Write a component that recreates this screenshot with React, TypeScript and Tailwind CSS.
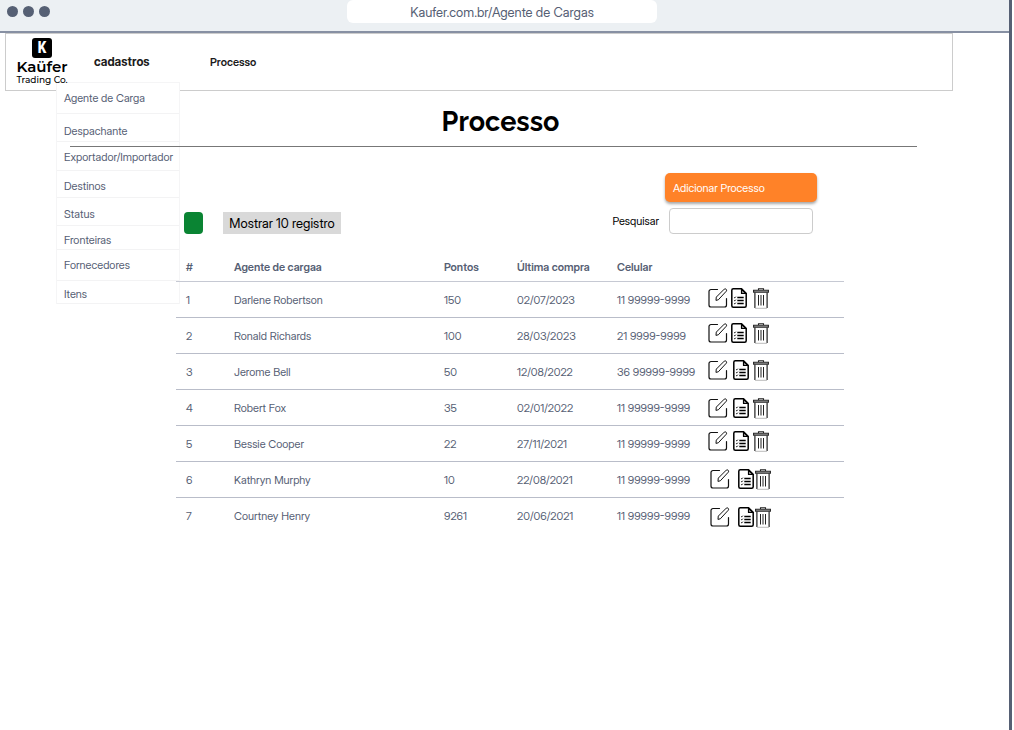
import React from "react";

const MENU = [
  { label: "Agente de Carga", size: "h-[31px]" },
  { label: "Despachante", size: "mt-0.5 h-[26px] pt-1" },
  { label: "Exportador/Importador", size: "h-[29px] pt-0.5" },
  { label: "Destinos", size: "h-[27px] pt-1" },
  { label: "Status", size: "h-7 pt-1" },
  { label: "Fronteiras", size: "h-6 pt-1" },
  { label: "Fornecedores", size: "h-[31px]" },
  { label: "Itens", size: "h-[23px] pt-1" },
];

const NEAR = "grid-cols-[23px_22px_16px]";
const MID = "grid-cols-[25px_20px_16px]";
const FAR = "pl-0.5 grid-cols-[28px_17px_16px]";

const ROWS = [
  { name: "Darlene Robertson", points: "150", date: "02/07/2023", phone: "11 99999-9999", actions: NEAR + " pb-1" },
  { name: "Ronald Richards", points: "100", date: "28/03/2023", phone: "21 9999-9999", actions: NEAR + " pb-1.5" },
  { name: "Jerome Bell", points: "50", date: "12/08/2022", phone: "36 99999-9999", actions: MID + " pb-1" },
  { name: "Robert Fox", points: "35", date: "02/01/2022", phone: "11 99999-9999", actions: MID },
  { name: "Bessie Cooper", points: "22", date: "27/11/2021", phone: "11 99999-9999", actions: MID + " pb-1.5" },
  { name: "Kathryn Murphy", points: "10", date: "22/08/2021", phone: "11 99999-9999", actions: FAR + " pb-0.5" },
  { name: "Courtney Henry", points: "9261", date: "20/06/2021", phone: "11 99999-9999", actions: FAR + " pt-0.5" },
];

function EditIcon() {
  return (
    <svg className="h-5 w-5" viewBox="0 0 20 20" fill="none" stroke="#111" strokeWidth="1.2" strokeLinecap="round" strokeLinejoin="round">
      <path d="M9.500 1.500H3A2 2 0 0 0 1 3.500V17a2 2 0 0 0 2 2h13.500a2 2 0 0 0 2-2v-6.500" />
      <path d="M8 12l.3-2.900 8-8q1-.7 1.900.2.800.9.100 1.900L10.600 11.500z" strokeWidth="1" />
    </svg>
  );
}

function ListIcon() {
  return (
    <svg className="h-5 w-4" viewBox="0 0 16 20" fill="none" stroke="#000" strokeWidth="1.5" strokeLinejoin="round">
      <path d="M10.500.8H2.300Q.8.800.8 2.300v15.400q0 1.500 1.500 1.500h11.400q1.500 0 1.500-1.500V5.500z" />
      <path d="M10.500.8v4.700h4.700z" fill="#000" fillOpacity=".4" strokeWidth="1.200" />
      <path d="M6.300 9.500h6.400M6.300 12.500h6.400M6.300 15.500h6.400" strokeWidth="1.300" />
      <path d="M3 9.300l.7.600 1.100-1.200M3 12.300l.7.600 1.100-1.200M3 15.300l.7.600 1.100-1.200" strokeWidth="1" />
    </svg>
  );
}

function TrashIcon() {
  return (
    <svg className="h-[21px] w-4" viewBox="0 0 16 21" fill="none" stroke="#222" strokeWidth="1.1">
      <path d="M5.500 2V.7h5V2" />
      <path d="M.6 2.300h14.800v1.800H.6z" fill="#ccc" />
      <path d="M1.900 4.500V20M14.100 4.500V20" strokeWidth="1.200" />
      <path d="M2 20.300h12" stroke="#bbb" strokeWidth="1" />
      <path d="M5.500 7v10.500M8 7v10.500M10.500 7v10.500" strokeWidth="1" />
    </svg>
  );
}

export default function App() {
  return (
    <div className="mr-0.5 min-h-screen border-r-[3px] border-[#566074] bg-white font-['Inter_Display','Inter',sans-serif] text-[11px] leading-4 text-[#566074]">
      <header className="grid h-[33px] grid-cols-[1fr_310px_1fr] border-b-2 border-[#8790a3] bg-[#ecf0f3] pr-[5px]">
        <div className="flex h-[23px] items-center gap-[5px] pl-[7px]">
          <span className="size-[11px] rounded-full bg-[#566074]" />
          <span className="size-[11px] rounded-full bg-[#566074]" />
          <span className="size-[11px] rounded-full bg-[#566074]" />
        </div>
        <div className="flex h-[23px] items-center justify-center rounded-md bg-white text-[13px]">
          Kaufer.com.br/Agente de Cargas
        </div>
      </header>

      <nav className="relative ml-[5px] mr-14 flex h-[58px] items-center border border-[#ccc] text-black">
        <a href="#inicio" className="relative z-10 ml-[11px] flex w-[50px] flex-col items-center pb-0.5 font-['Montserrat','Lato',sans-serif]">
          <span className="flex size-5 items-center justify-center rounded-[3px] bg-black font-['Roboto_Condensed','Roboto',sans-serif] text-base font-bold text-white">
            K
          </span>
          <span className="text-[15px] font-semibold leading-[18px]">Kaüfer</span>
          <span className="whitespace-nowrap text-[9px] font-medium leading-2">Trading Co.</span>
        </a>
        <a href="#cadastros" className="ml-[27px] w-[116px] text-xs font-bold text-[#1c1c1c]">cadastros</a>
        <a href="#processo" className="font-semibold text-[#1c1c1c]">Processo</a>
        <ul className="absolute left-[50px] top-12 w-[124px] border-x border-t border-[#f5f5f6] bg-white text-[#566074]">
          {MENU.map((item) => (
            <li key={item.label} className={"flex items-center border-b border-[#f3f3f4] pl-[7px] " + item.size}>
              <a href={"#" + item.label}>{item.label}</a>
            </li>
          ))}
        </ul>
      </nav>

      <main>
        <h1 className="flex h-[55px] items-center justify-center pr-2 pt-1.5 font-['Raleway','Lato',sans-serif] text-[27px] font-bold text-black">
          Processo
        </h1>
        <hr className="relative ml-[70px] mr-[92px] border-[#777]" />

        <div className="ml-44 mr-[165px]">
          <div className="flex justify-end pr-[27px] pt-[26px]">
            <button className="h-[29px] w-[152px] rounded-[5px] bg-[#ff8228] pl-2 text-left text-white shadow-[0_2px_3px_rgba(0,0,0,0.35)]">
              Adicionar Processo
            </button>
          </div>
          <div className="mt-1.5 flex items-end pl-2 pr-[31px]">
            <button aria-label="Exportar" className="h-[22px] w-[19px] rounded-sm bg-[#0a8433]" />
            <button className="ml-5 h-[22px] w-[118px] bg-[#d9d9d9] text-[13px] text-black">
              Mostrar 10 registro
            </button>
            <label htmlFor="pesquisar" className="ml-auto mr-2.5 self-center text-black">Pesquisar</label>
            <input id="pesquisar" type="text" className="h-[26px] w-36 rounded border border-[#ccc] bg-white px-2 text-black" />
          </div>

          <table className="relative mt-[18px] w-full table-fixed text-left">
            <thead>
              <tr className="h-[29px] border-b border-[#c6c9d3] [&>th]:px-2.5 [&>th]:pt-0.5 [&>th]:font-semibold">
                <th className="w-12">#</th>
                <th>Agente de cargaa</th>
                <th className="w-[73px]">Pontos</th>
                <th className="w-[100px] whitespace-nowrap">Última compra</th>
                <th className="w-[91px]">Celular</th>
                <th className="w-[146px]" aria-label="Ações" />
              </tr>
            </thead>
            <tbody>
              {ROWS.map((row, i) => (
                <tr key={row.name} className="h-9 border-b border-[#b9bdc9] last:border-0 [&>td]:whitespace-nowrap [&>td]:px-2.5 [&>td]:pb-0 [&>td]:pt-0.5">
                  <td>{i + 1}</td>
                  <td>{row.name}</td>
                  <td>{row.points}</td>
                  <td>{row.date}</td>
                  <td>{row.phone}</td>
                  <td>
                    <div className={"grid items-center " + row.actions}>
                      <button aria-label="Editar"><EditIcon /></button>
                      <button aria-label="Detalhes"><ListIcon /></button>
                      <button aria-label="Excluir"><TrashIcon /></button>
                    </div>
                  </td>
                </tr>
              ))}
            </tbody>
          </table>
        </div>
      </main>
    </div>
  );
}
